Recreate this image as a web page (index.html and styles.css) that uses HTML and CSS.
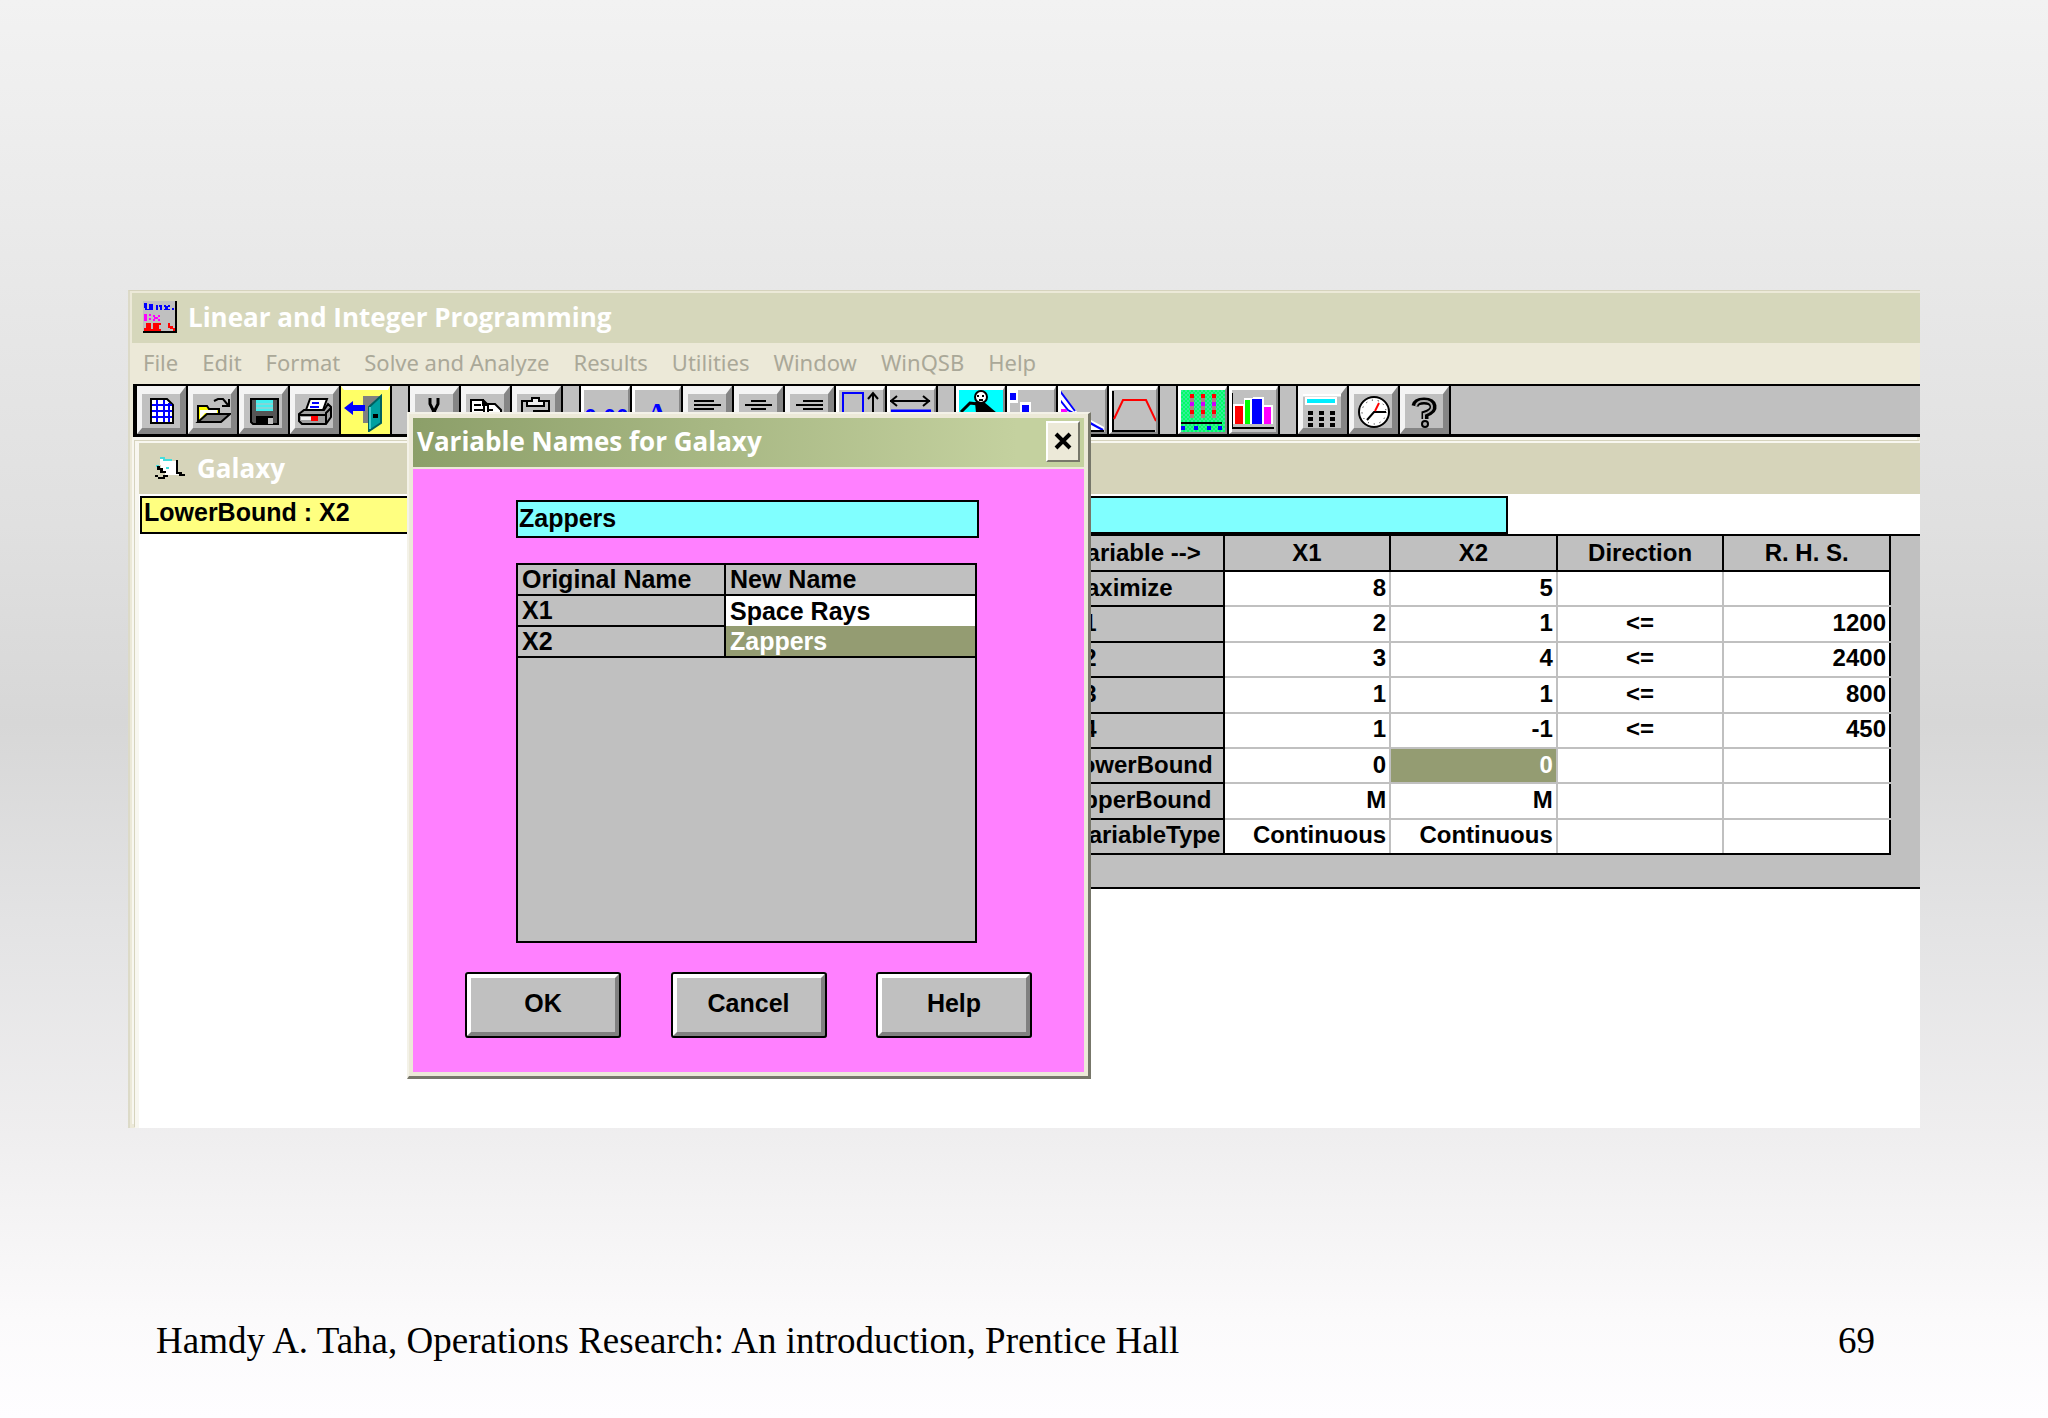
FILE: index.html
```html
<!DOCTYPE html>
<html lang="en">
<head>
<meta charset="utf-8">
<title>Linear and Integer Programming</title>
<link rel="stylesheet" href="styles.css">
</head>
<body>
<div class="slide">
  <main class="app">
    <header class="titlebar">
      <svg class="app-icon" viewBox="0 0 34 32" shape-rendering="crispEdges"><path fill="#c0c0c0" d="M0 0h32v30H0z"/><path fill="#000" d="M32 0h2v32H0v-2h32z"/><path fill="#00f" d="M1 2h3v6h2V3h4v6H2V7H1zM13 4h2v5h-2zM16 4h3v5h-2V6h-1zM21 4h2v1h2V4h2v2h-2v2h2v1h-6V8h1V6h-1zM29 7h2v2h-2z"/><path fill="#f0f" d="M1 13h3v7H1zM6 13h2v2H6zM6 17h2v2H6zM10 14h2v2h3v-2h2v2h-2v2h2v2h-2v-2h-3v2h-2v-2h1v-2h-1z"/><path fill="#f00" d="M3 22h5v6h2v-6h8v2h-2v4h2v2H1v-3h2zM25 22h2v3h3v2h2v3h-2v-2h-3v-1h-2z"/></svg>
      <h1>Linear and Integer Programming</h1>
    </header>
    <nav class="menu">
      <button>File</button><button>Edit</button><button>Format</button><button>Solve and Analyze</button><button>Results</button><button>Utilities</button><button>Window</button><button>WinQSB</button><button>Help</button>
    </nav>
    <div class="toolbar">
      <div class="group">
        <button class="tool deep" aria-label="New"><svg viewBox="0 0 49 46"><path fill="#fff" stroke="#000" stroke-width="2" d="M14 12h16l6 6v18H14z"/><path fill="none" stroke="#00f" stroke-width="2" d="M20 13v22M27 13v22M32 16v19M15 18h20M15 24h20M15 30h20"/></svg></button>
        <button class="tool deep" aria-label="Open"><svg viewBox="0 0 49 46"><path fill="#ff0" stroke="#000" stroke-width="2" d="M10 35V19h9l2 3h10v5"/><path fill="#fff" d="M12 23h17v3H17l-5 6z"/><path fill="#808080" stroke="#000" stroke-width="2" d="M10 35l9-8h23l-9 8z"/><path fill="none" stroke="#000" stroke-width="2" d="M26 14l4-2h5l5 6M41 12v7h-7"/></svg></button>
        <button class="tool deep" aria-label="Save"><svg viewBox="0 0 49 46"><path fill="#555" stroke="#000" stroke-width="2" d="M12 12h27v25H14l-2-2z"/><path fill="#4ee" d="M17 13h17v11H17z"/><path stroke="#c0c0c0" d="M17 17h17M17 21h17"/><path d="M17 29h17v8H17z"/><path fill="#c0c0c0" d="M29 31h5v6h-5z"/></svg></button>
        <button class="tool deep" aria-label="Print"><svg viewBox="0 0 49 46"><path fill="#fff" stroke="#000" stroke-width="2" d="M16 23l4-11h17l-4 11z"/><path stroke="#00f" stroke-width="2" d="M22 16h7M20 20h9"/><path fill="#a0a0a0" stroke="#000" stroke-width="2" d="M9 27l5-4h20l4-6 3 3v10l-5 7H12l-3-3zM9 28h27M36 37V26l5-5"/><path fill="#eee" d="M11 30h10v3H11z"/><path fill="red" d="M21 29h7v5h-7z"/></svg></button>
        <button class="tool exit" aria-label="Exit"><svg viewBox="0 0 49 46"><path fill="#808080" d="M22 9h19v27H22z"/><path fill="#00a0a0" stroke="#006060" stroke-width="2" d="M28 20l12-11v27l-12 8z"/><path fill="#4cc" d="M28 20h2v22h-2z"/><path d="M32 27h5v4h-5z"/><path fill="#00f" d="M3 21l9-7v4h12v6H12v4z"/></svg></button>
      </div>
      <div class="group">
        <button class="tool deep" aria-label="Cut"><svg viewBox="0 0 49 46"><path fill="none" stroke="#000" stroke-width="3" d="M20 11v6l4 8 4-8v-6M24 24l-6 10M24 24l6 10"/></svg></button>
        <button class="tool deep" aria-label="Copy"><svg viewBox="0 0 49 46"><path fill="#fff" stroke="#000" stroke-width="2" d="M10 13h12l5 5v14H10zM23 17h11l6 6v14H23z"/><path stroke="#000" stroke-width="2" d="M13 18h7M13 23h9M26 23h6M22 12v6h5"/></svg></button>
        <button class="tool deep" aria-label="Paste"><svg viewBox="0 0 49 46"><path fill="none" stroke="#000" stroke-width="2" d="M10 14h27v22H10z"/><path fill="#eee" stroke="#000" stroke-width="2" d="M15 19v-5h5v-3h7v3h5v5z"/><path fill="#fff" stroke="#000" stroke-width="2" d="M22 24h14v12H22z"/></svg></button>
      </div>
      <div class="group">
        <button class="tool" aria-label="Number format"><span class="digits">0.00</span></button>
        <button class="tool" aria-label="Font"><span class="glyph">A</span></button>
        <button class="tool deep" aria-label="Align left"><svg viewBox="0 0 49 46"><path stroke="#000" stroke-width="2" d="M11 14h20M11 18h27M11 22h20"/></svg></button>
        <button class="tool deep" aria-label="Align center"><svg viewBox="0 0 49 46"><path stroke="#000" stroke-width="2" d="M17 14h15M11 18h27M17 22h15"/></svg></button>
        <button class="tool deep" aria-label="Align right"><svg viewBox="0 0 49 46"><path stroke="#000" stroke-width="2" d="M18 14h20M11 18h27M18 22h20"/></svg></button>
        <button class="tool" aria-label="Row height"><svg viewBox="0 0 49 46"><path fill="none" stroke="#00f" stroke-width="2" d="M7 40V6h20v34"/><path fill="none" stroke="#000" stroke-width="2" d="M37 40V7M32 12l5-6 5 6"/></svg></button>
        <button class="tool" aria-label="Column width"><svg viewBox="0 0 49 46"><path fill="none" stroke="#000" stroke-width="2" d="M3 14h40M10 9l-6 5 6 5M36 9l6 5-6 5"/><path stroke="#00f" stroke-width="3" d="M4 24h40"/></svg></button>
      </div>
      <div class="group">
        <button class="tool cyan" aria-label="Solve"><svg viewBox="0 0 49 46"><path stroke="#000" stroke-width="3" fill="none" d="M5 25l9-9 8 1"/><path d="M19 15h9l13 11H20z"/><circle cx="25" cy="10" r="6" fill="#fff" stroke="#000" stroke-width="2"/><path stroke="#000" stroke-width="2" d="M22 8v2M27 8v2M23 13h4"/></svg></button>
        <button class="tool" aria-label="Steps"><svg viewBox="0 0 49 46"><path fill="#fff" d="M2 3h9v13H2zM13 15h11v10H13z"/><path fill="#00f" d="M3 6h6v7H3zM15 18h7v7h-7z"/></svg></button>
        <button class="tool" aria-label="Graph"><svg viewBox="0 0 49 46"><path fill="#fff" d="M2 4l18 22 26 14v4H2z"/><path fill="#f0f" d="M2 22h6l8 14H2z"/><path stroke="#00f" stroke-width="2" fill="none" d="M2 4l15 20M2 13l8 10 35 20M30 35l15 8"/><path fill="none" stroke="#000" stroke-width="2" d="M2 4v40h44"/></svg></button>
        <button class="tool" aria-label="Parametric analysis"><svg viewBox="0 0 49 46"><path fill="none" stroke="#000" stroke-width="2" d="M4 4v40h42"/><path fill="none" stroke="red" stroke-width="2" d="M5 32l9-19h23l10 21"/></svg></button>
      </div>
      <div class="group">
        <button class="tool green" aria-label="Time series"><svg viewBox="0 0 49 46"><path stroke="#b08080" stroke-width="4" d="M14 7v24M25 7v24M36 7v24"/><path stroke="red" stroke-width="4" stroke-dasharray="4 4" d="M14 7v24M25 7v24M36 7v24"/><path stroke="#c0f" stroke-width="4" stroke-dasharray="4 12" stroke-dashoffset="-8" d="M14 7v24M25 7v24M36 7v24"/><path stroke="#000" stroke-width="2" d="M3 36h41"/><path fill="#00f" d="M3 39h4v4H3zM16 39h4v4h-4zM29 39h4v4h-4zM40 39h4v4h-4z"/></svg></button>
        <button class="tool" aria-label="Bar chart"><svg viewBox="0 0 49 46"><path fill="#fff" d="M4 17h11v-6h9v-1h11v8h9v19H4z"/><path fill="red" d="M6 19h8v18H6z"/><path fill="#0f0" d="M16 13h5v24h-5z"/><path fill="#00f" d="M23 12h10v25H23z"/><path fill="#f0f" d="M35 20h7v17h-7z"/><path fill="none" stroke="#000" stroke-width="2" d="M3 6v35h42"/></svg></button>
      </div>
      <div class="group">
        <button class="tool deep" aria-label="Calculator"><svg viewBox="0 0 49 46"><path fill="#c0c0c0" stroke="#fff" stroke-width="3" d="M3 8h42v35H3z"/><path fill="#fff" d="M7 10h32v8H7z"/><path fill="#0ef" d="M9 12h28v4H9z"/><path stroke="#000" stroke-width="4" stroke-dasharray="5 6" d="M10 26h28M10 32h28M10 38h28"/></svg></button>
        <button class="tool deep" aria-label="Clock"><svg viewBox="0 0 49 46"><circle cx="25" cy="25" r="15" fill="#fff" stroke="#000" stroke-width="2"/><circle cx="25" cy="25" r="12" fill="none" stroke="#000" stroke-width="1" stroke-dasharray="1 5"/><path fill="none" stroke="#000" stroke-width="2" d="M18 33l7-8h12"/><path stroke="red" stroke-width="2" d="M26 24l4-8"/></svg></button>
        <button class="tool deep" aria-label="Help"><svg viewBox="0 0 49 46"><path fill="none" stroke="#000" stroke-width="7" d="M15 19q1-5 9-5t9 5-8 8v5"/><path fill="none" stroke="#aaa" stroke-width="2" d="M16 19q1-5 8-5t8 5-8 8v5"/><circle cx="25" cy="37" r="4"/><circle cx="25" cy="37" r="2" fill="#aaa"/></svg></button>
      </div>
    </div>
    <section class="child">
      <header class="child-title">
        <svg class="child-icon" viewBox="0 0 30 24" shape-rendering="crispEdges"><path fill="#fff" d="M5 3h6v1h6v1h4v12h5v2H10v-4H6z"/><path fill="#4dd" d="M5 1h5v2h7v2H8V3H5zM1 9h3v2H1zM11 11h3v2h-3z"/><path d="M21 4h2v12h4v2h3v2h-6v-2h-3zM2 10h3v2h3v3h3v2H5v-3H2zM0 19h3v2h5v-2h5v2h-3v2H3v-2H0z"/></svg>
        <h2>Galaxy</h2>
      </header>
      <div class="entry">
        <output class="cell-name">LowerBound : X2</output>
        <input class="cell-value" aria-label="Cell value">
      </div>
      <div class="sheet">
        <table>
          <thead><tr><th>Variable --&gt;</th><th>X1</th><th>X2</th><th>Direction</th><th>R. H. S.</th></tr></thead>
          <tbody>
            <tr><th>Maximize</th><td>8</td><td>5</td><td></td><td></td></tr>
            <tr><th>C1</th><td>2</td><td>1</td><td class="dir">&lt;=</td><td>1200</td></tr>
            <tr><th>C2</th><td>3</td><td>4</td><td class="dir">&lt;=</td><td>2400</td></tr>
            <tr><th>C3</th><td>1</td><td>1</td><td class="dir">&lt;=</td><td>800</td></tr>
            <tr><th>C4</th><td>1</td><td>-1</td><td class="dir">&lt;=</td><td>450</td></tr>
            <tr><th>LowerBound</th><td>0</td><td class="selected">0</td><td></td><td></td></tr>
            <tr><th>UpperBound</th><td>M</td><td>M</td><td></td><td></td></tr>
            <tr><th class="wide">VariableType</th><td>Continuous</td><td>Continuous</td><td></td><td></td></tr>
          </tbody>
        </table>
      </div>
    </section>
    <div class="dialog" role="dialog" aria-labelledby="dialog-title">
      <header class="dialog-title">
        <h2 id="dialog-title">Variable Names for Galaxy</h2>
        <button class="close" aria-label="Close"><svg viewBox="0 0 18 18"><path stroke="#000" stroke-width="4" d="M2 2l14 14M16 2L2 16"/></svg></button>
      </header>
      <div class="dialog-body">
        <input class="name-input" aria-label="New name" value="Zappers">
        <div class="names">
          <table>
            <tr><th>Original Name</th><th>New Name</th></tr>
            <tr><th>X1</th><td>Space Rays</td></tr>
            <tr><th>X2</th><td class="selected">Zappers</td></tr>
          </table>
        </div>
        <div class="actions">
          <button>OK</button><button>Cancel</button><button>Help</button>
        </div>
      </div>
    </div>
  </main>
  <footer class="footer"><span>Hamdy A. Taha, Operations Research: An introduction, Prentice Hall</span><span>69</span></footer>
</div>
</body>
</html>
```
FILE: styles.css
```css
* { box-sizing: border-box; }
body { margin: 0; }
h1, h2 { margin: 0; }
button, input { font: inherit; color: inherit; border-radius: 0; }

.slide {
  min-height: 100vh;
  padding: 290px 128px 0;
  background: linear-gradient(#f2f2f2 0, #e7e7e7 22%, #e0e0e0 37%, #d7d7d7 51%, #e3e3e4 65%, #efeeef 80%, #fbfafb 93%, #fefdff);
  font: bold 25px/30px "Liberation Sans", Arial, sans-serif;
  color: #000;
  display: flex;
  flex-direction: column;
}

.app {
  position: relative;
  min-height: 838px;
  padding-left: 4px;
  border-top: 1px solid #d6d3bd;
  border-left: 2px solid #dcdac8;
  background: #ece9d8;
  display: flex;
  flex-direction: column;
  overflow: hidden;
}

.titlebar {
  display: flex;
  align-items: center;
  gap: 11px;
  height: 50px;
  margin: 2px 0 0 -2px;
  padding: 0 0 3px 11px;
  background: #d6d7bb;
  color: #fff;
}
.app-icon { width: 34px; height: 32px; }
h1, h2 { font: bold 26px/32px "Open Sans", "Noto Sans", sans-serif; white-space: nowrap; }

.menu {
  display: flex;
  align-items: center;
  gap: 24px;
  height: 41px;
  padding: 0 0 4px 9px;
  font: 22px/28px "Noto Sans", sans-serif;
  color: #aaa898;
}
.menu button { padding: 0; border: 0; background: none; }

.toolbar {
  display: flex;
  gap: 16px;
  height: 53px;
  flex: none;
  margin-left: -1px;
  border: solid #000;
  border-width: 2px 0 3px 2px;
  background: #c0c0c0;
}
.group { display: flex; gap: 2px; padding: 0 2px; background: #000; }
.tool {
  position: relative;
  width: 49px;
  height: 48px;
  padding: 0;
  border: solid;
  border-width: 4px 2px 2px 3px;
  border-color: #fff #888 #888 #fff;
  background: #c0c0c0;
  overflow: hidden;
}
.tool svg { position: absolute; left: -3px; top: -3px; width: 49px; height: 46px; }
.deep {
  border-width: 8px 6px 6px 5px;
  border-color: #f4f4f4 #858585 #858585 #f4f4f4;
}
.deep::before { content: ""; position: absolute; left: -5px; right: -6px; top: -5px; height: 2px; background: #000; }
.deep svg { left: -5px; top: -7px; }
.exit { background: #ff6; border-color: #fff #ff6 #ff6 #ff6; }
.cyan { background: #0ff; }
.green { background: repeating-conic-gradient(#0f6 0 25%, #3e9 0 50%) 0 0 / 4px 4px; }
.digits, .glyph { color: #00f; display: block; line-height: 24px; }
.digits { font-size: 23px; padding-top: 13px; }
.glyph { font: bold 28px/28px "Liberation Serif", serif; padding-top: 4px; }

.child {
  flex: 1;
  margin: 4px 0 0 1px;
  border: solid #f8f7f0;
  border-width: 2px 0 0 4px;
  background: #fff;
  box-shadow: -1px -1px #d6d3bd, -3px -4px #f8f7f0;
}
.child-title {
  display: flex;
  align-items: center;
  gap: 12px;
  height: 51px;
  margin-bottom: 2px;
  padding: 0 0 2px 16px;
  background: #d6d4ba;
  color: #fff;
}
.child-icon { width: 30px; height: 24px; }
.entry { display: flex; height: 38px; margin-left: 1px; }
.cell-name { width: 684px; padding: 0 2px; border: 2px solid #000; background: #ffff80; line-height: 28px; }
.cell-value { width: 684px; border: 2px solid #000; border-left: 0; background: #80ffff; }
.sheet {
  margin-left: 917px;
  height: 355px;
  border: solid #000;
  border-width: 2px 0;
  background: #c0c0c0;
}
table { border-collapse: collapse; table-layout: fixed; }
.sheet table { width: 835px; height: 321px; margin-top: -2px; font-size: 24px; line-height: 26px; }
.sheet th, .sheet td { padding: 0 3px 2px; text-align: right; white-space: nowrap; overflow: hidden; }
.sheet td { background: #fff; border: 2px solid #c0c0c0; }
.sheet th { background: #c0c0c0; border: 2px solid #000; text-align: left; padding-left: 8px; padding-right: 0; }
.sheet thead th { height: 36px; text-align: center; padding: 0; }
.sheet thead th:first-child { padding-right: 8px; }
.sheet th.wide { padding-left: 16px; }
.sheet tbody tr:last-child td { border-bottom-color: #000; }
.sheet td:last-child { border-right-color: #000; }
.sheet tbody tr:first-child td { border-top-color: #000; }
.sheet td:nth-child(2) { border-left-color: #000; }
.sheet .dir { text-align: center; }
.selected.selected { background: #949c72; color: #fff; }

.dialog {
  position: absolute;
  left: 277px;
  top: 121px;
  width: 684px;
  height: 667px;
  padding: 4px;
  border: solid;
  border-width: 2px 3px 3px 2px;
  border-color: #f4f2e8 #77776a #77776a #f4f2e8;
  background: #ece9d8;
  display: flex;
  flex-direction: column;
}
.dialog-title {
  display: flex;
  align-items: center;
  justify-content: space-between;
  height: 49px;
  padding: 0 4px 3px;
  background: linear-gradient(90deg, #8c9f69, #c4d19f 90%);
  color: #fff;
}
.close {
  width: 34px;
  height: 41px;
  padding: 0;
  border: 2px solid;
  border-color: #fff #77776a #77776a #fff;
  background: #ece9d8;
}
.close svg { width: 18px; height: 18px; display: block; margin: auto; }
.dialog-body {
  flex: 1;
  margin-top: 2px;
  padding: 31px 52px 0;
  background: #ff80ff;
  display: flex;
  flex-direction: column;
}
.name-input { width: 463px; height: 38px; margin-left: 51px; padding: 0 1px 2px; border: 2px solid #000; background: #80ffff; }
.names { width: 461px; height: 380px; margin: 25px 0 0 51px; border: 2px solid #000; background: #c0c0c0; }
.names table { width: 461px; margin: -2px 0 0 -2px; line-height: 29px; }
.names th, .names td { height: 31px; padding: 0 4px; text-align: left; border: 2px solid #000; }
.names th:first-child { width: 208px; }
.names td { background: #fff; border-top: 0; border-bottom: 0; }
.names tr:last-child td { border-bottom: 2px solid #000; }
.actions { display: flex; justify-content: space-between; margin-top: 29px; }
.actions button {
  width: 156px;
  height: 66px;
  padding: 0 0 4px;
  border: 6px solid;
  border-color: #fff #808080 #808080 #fff;
  outline: 2px solid #000;
  outline-offset: -2px;
  border-radius: 3px;
  background: #c0c0c0;
}

.footer {
  display: flex;
  justify-content: space-between;
  padding: 192px 45px 0 28px;
  font: 37px/42px "Liberation Serif", "Times New Roman", serif;
}
```
